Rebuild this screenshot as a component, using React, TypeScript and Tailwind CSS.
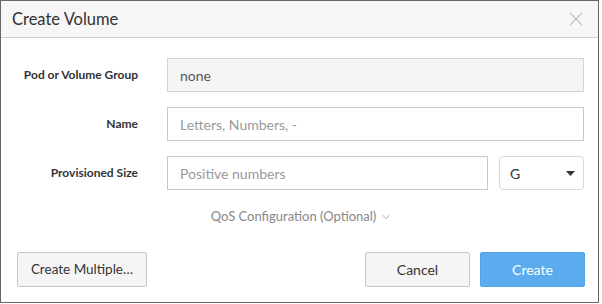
import { ChevronDown } from "lucide-react";

function Label({ children }: { children: string }) {
  return (
    <div className="w-[137px] shrink-0 text-right text-[12px] font-bold text-[#333] leading-none">
      {children}
    </div>
  );
}

export default function App() {
  return (
    <div className="w-[602px] h-[304px] bg-white" style={{ fontFamily: "Lato, 'Liberation Sans', sans-serif" }}>
      <div className="w-[599px] h-[303px] border border-[#666] flex flex-col bg-white">
        <div className="h-[37px] shrink-0 bg-[#f6f6f6] border-b border-[#cfcfcf] flex items-center justify-between pl-[11px] pr-[15px]">
          <h1 className="text-[16.5px] text-[#333] leading-none">Create Volume</h1>
          <svg width="14" height="14" viewBox="0 0 14 14" className="text-[#c4c4c4]">
            <path d="M1 1L13 13M13 1L1 13" stroke="currentColor" strokeWidth="1.3" />
          </svg>
        </div>

        <div className="flex flex-col gap-[15px] pt-[20px] pr-[14px]">
          <div className="flex items-center gap-[29px]">
            <Label>Pod or Volume Group</Label>
            <div className="flex-1 h-[34px] bg-[#f5f5f5] border border-[#d4d4d4] flex items-center px-[12px] text-[14px] text-[#555]">
              none
            </div>
          </div>
          <div className="flex items-center gap-[29px]">
            <Label>Name</Label>
            <input
              placeholder="Letters, Numbers, -"
              className="flex-1 h-[34px] border border-[#c8c8c8] px-[12px] text-[14px] text-[#555] placeholder:text-[#9a9a9a] outline-none"
            />
          </div>
          <div className="flex items-center gap-[29px]">
            <Label>Provisioned Size</Label>
            <input
              placeholder="Positive numbers"
              className="w-[321px] h-[34px] border border-[#c8c8c8] px-[12px] text-[14px] text-[#555] placeholder:text-[#9a9a9a] outline-none"
            />
            <div className="ml-[-18px] flex-1 h-[34px] border border-[#d9d9d9] rounded-[4px] flex items-center justify-between pl-[10px] pr-[8px] text-[14px] text-[#333]">
              <span>G</span>
              <svg width="9" height="5" viewBox="0 0 9 5">
                <path d="M0 0H9L4.5 5Z" fill="#333" />
              </svg>
            </div>
          </div>
        </div>

        <div className="flex items-center justify-center gap-[4px] mt-[17px] text-[13px] text-[#888]">
          <span className="ml-[4px]">QoS Configuration (Optional)</span>
          <ChevronDown size={12} strokeWidth={1.5} />
        </div>

        <div className="mt-auto mb-[15px] flex items-center justify-between pl-[16px] pr-[13px]">
          <button className="h-[35px] w-[130px] bg-[#f5f5f5] border border-[#c8c8c8] rounded-[2px] text-[13.5px] text-[#333]">
            Create Multiple…
          </button>
          <div className="flex gap-[10px]">
            <button className="h-[35px] w-[105px] bg-[#f5f5f5] border border-[#c8c8c8] rounded-[2px] text-[14px] text-[#333]">
              Cancel
            </button>
            <button className="h-[35px] w-[105px] bg-[#5aacee] border border-[#52a4e6] rounded-[2px] text-[14px] text-white">
              Create
            </button>
          </div>
        </div>
      </div>
    </div>
  );
}
